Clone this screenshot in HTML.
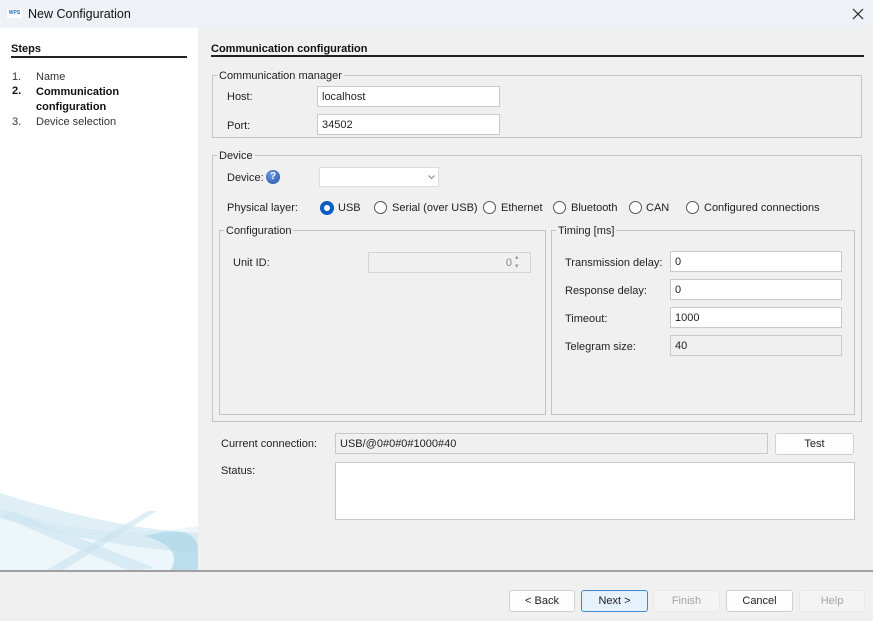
<!DOCTYPE html>
<html><head><style>
*{margin:0;padding:0;box-sizing:border-box}
body{width:873px;height:621px;overflow:hidden;background:#f0f0f0;font-family:"Liberation Sans",sans-serif;font-size:11px;color:#222;position:relative}
.a{position:absolute;white-space:nowrap}
.in{position:absolute;background:#fff;border:1px solid #c9c9c9;padding:1px 4px 0;line-height:19px;font-size:11px}
.grp{position:absolute;border:1px solid #c4c4c4}
.lg{position:absolute;background:#f0f0f0;padding:0 2px;line-height:12px;top:-6px;left:4px;font-size:11px}
.rad{position:absolute;width:13px;height:13px;border:1px solid #555;border-radius:50%;background:#fff}
.btn{position:absolute;background:#fdfdfd;border:1px solid #d0d0d0;border-radius:3px;text-align:center;line-height:21px;font-size:11px}
</style></head><body>
<div class="a" style="left:0;top:0;width:873px;height:28px;background:#eef1f6"></div>
<div class="a" style="left:7px;top:9px;width:15px;height:9px;background:#fff;font-size:5px;color:#2a6fc0;font-weight:bold;line-height:9px;text-align:center">WPS</div>
<div class="a" style="left:28px;top:7px;font-size:12.5px;color:#111">New Configuration</div>
<svg class="a" style="left:852px;top:8px" width="12" height="12"><path d="M1 1L11 11M11 1L1 11" stroke="#222" stroke-width="1.2"/></svg>

<div class="a" style="left:0;top:28px;width:198px;height:543px;background:#fff;overflow:hidden">
<svg width="198" height="543" style="position:absolute;left:0;top:0">
<path d="M0 480 Q100 515 198 498 L198 543 L0 543Z" fill="#dcedf5" opacity=".5"/>
<path d="M0 465 Q110 500 198 505 L198 525 Q100 518 0 490Z" fill="#c6e2ef" opacity=".55"/>
<path d="M12 483 L155 540 L130 543 L0 488Z" fill="#cfe7f1" opacity=".7"/>
<path d="M157 483 L62 543 L45 543 L148 483Z" fill="#c9e3ef" opacity=".6"/>
<path d="M145 508 Q195 495 198 520 L198 543 L170 543 Q185 520 145 508Z" fill="#b3d9e9" opacity=".85"/>
</svg>
<div class="a" style="left:11px;top:15px;font-weight:bold;color:#111">Steps</div>
<div class="a" style="left:11px;top:28px;width:176px;height:2px;background:#222"></div>
<div class="a" style="left:12px;top:43px;color:#333">1.</div><div class="a" style="left:36px;top:43px;color:#333">Name</div>
<div class="a" style="left:12px;top:57px;font-weight:bold;color:#111">2.</div><div class="a" style="left:36px;top:57px;font-weight:bold;color:#111;line-height:15px">Communication<br>configuration</div>
<div class="a" style="left:12px;top:88px;color:#333">3.</div><div class="a" style="left:36px;top:88px;color:#333">Device selection</div>
</div>

<div class="a" style="left:211px;top:43px;font-weight:bold;color:#111">Communication configuration</div>
<div class="a" style="left:211px;top:55px;width:653px;height:2px;background:#222"></div>

<div class="grp" style="left:212px;top:75px;width:650px;height:63px"><div class="lg">Communication manager</div></div>
<div class="a" style="left:227px;top:91px">Host:</div>
<div class="in" style="left:317px;top:86px;width:183px;height:21px">localhost</div>
<div class="a" style="left:227px;top:120px">Port:</div>
<div class="in" style="left:317px;top:114px;width:183px;height:21px">34502</div>

<div class="grp" style="left:212px;top:155px;width:650px;height:267px"><div class="lg">Device</div></div>
<div class="a" style="left:227px;top:172px">Device:</div>
<div class="a" style="left:266px;top:170px;width:14px;height:14px;border-radius:50%;background:radial-gradient(circle at 40% 35%,#6b9be0,#1f4fa8);color:#fff;font-size:10px;font-weight:bold;text-align:center;line-height:14px">?</div>
<div class="in" style="left:319px;top:167px;width:120px;height:20px;border-color:#ddd"></div>
<svg class="a" style="left:428px;top:175px" width="7" height="5"><path d="M0.5 0.5L3.5 3.5L6.5 0.5" stroke="#888" fill="none"/></svg>
<div class="a" style="left:227px;top:202px">Physical layer:</div>
<div class="a" style="left:320px;top:201px;width:14px;height:14px;border-radius:50%;background:#0b5cbf"></div>
<div class="a" style="left:324px;top:205px;width:6px;height:6px;border-radius:50%;background:#fff"></div>
<div class="a" style="left:338px;top:202px">USB</div>
<div class="rad" style="left:374px;top:201px"></div><div class="a" style="left:392px;top:202px">Serial (over USB)</div>
<div class="rad" style="left:483px;top:201px"></div><div class="a" style="left:501px;top:202px">Ethernet</div>
<div class="rad" style="left:553px;top:201px"></div><div class="a" style="left:571px;top:202px">Bluetooth</div>
<div class="rad" style="left:629px;top:201px"></div><div class="a" style="left:646px;top:202px">CAN</div>
<div class="rad" style="left:686px;top:201px"></div><div class="a" style="left:704px;top:202px">Configured connections</div>

<div class="grp" style="left:219px;top:230px;width:327px;height:185px"><div class="lg">Configuration</div></div>
<div class="a" style="left:233px;top:257px">Unit ID:</div>
<div class="in" style="left:368px;top:252px;width:163px;height:21px;background:#f0f0f0;border-color:#d5d5d5;text-align:right;padding-right:18px;color:#888">0</div>
<div class="a" style="left:515px;top:253px;color:#999;font-size:7px;line-height:9px">▴<br>▾</div>

<div class="grp" style="left:551px;top:230px;width:304px;height:185px"><div class="lg">Timing [ms]</div></div>
<div class="a" style="left:565px;top:257px">Transmission delay:</div>
<div class="in" style="left:670px;top:251px;width:172px;height:21px">0</div>
<div class="a" style="left:565px;top:285px">Response delay:</div>
<div class="in" style="left:670px;top:279px;width:172px;height:21px">0</div>
<div class="a" style="left:565px;top:313px">Timeout:</div>
<div class="in" style="left:670px;top:307px;width:172px;height:21px">1000</div>
<div class="a" style="left:565px;top:341px">Telegram size:</div>
<div class="in" style="left:670px;top:335px;width:172px;height:21px;background:#f0f0f0">40</div>

<div class="a" style="left:221px;top:438px">Current connection:</div>
<div class="in" style="left:335px;top:433px;width:433px;height:21px;background:#f0f0f0">USB/@0#0#0#1000#40</div>
<div class="btn" style="left:775px;top:433px;width:79px;height:22px">Test</div>
<div class="a" style="left:221px;top:465px">Status:</div>
<div class="in" style="left:335px;top:462px;width:520px;height:58px"></div>

<div class="a" style="left:0;top:570px;width:873px;height:2px;background:#a0a0a0"></div>
<div class="btn" style="left:509px;top:590px;width:66px;height:22px">&lt; Back</div>
<div class="btn" style="left:581px;top:590px;width:67px;height:22px;background:#e5f1fb;border-color:#3c88d6">Next &gt;</div>
<div class="btn" style="left:653px;top:590px;width:67px;height:22px;background:#f4f4f4;border-color:#e8e8e8;color:#a5a5a5">Finish</div>
<div class="btn" style="left:726px;top:590px;width:67px;height:22px">Cancel</div>
<div class="btn" style="left:799px;top:590px;width:66px;height:22px;background:#f4f4f4;border-color:#e8e8e8;color:#a5a5a5">Help</div>
</body></html>
